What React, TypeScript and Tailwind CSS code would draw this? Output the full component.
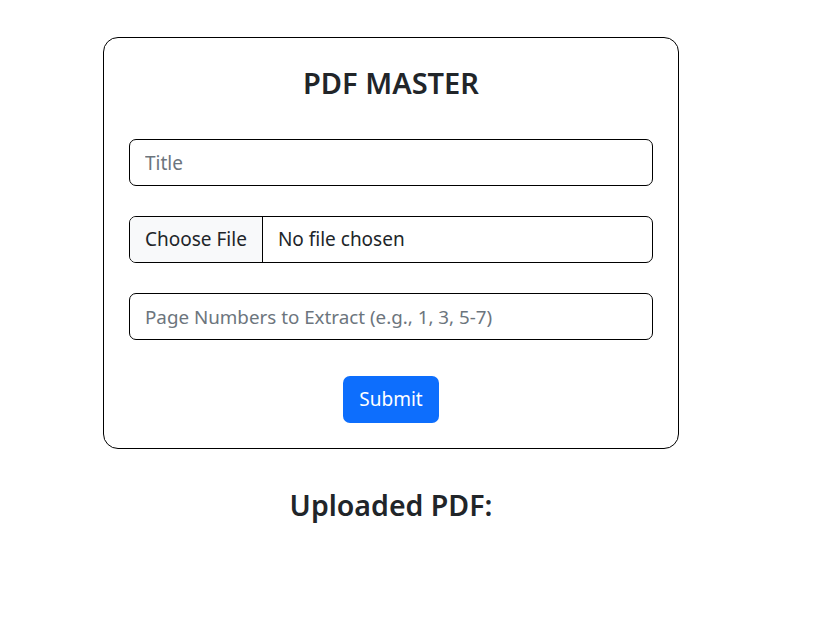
import React from "react";

export default function App() {
  const font = { fontFamily: '"Noto Sans", "Open Sans", sans-serif' };
  return (
    <div className="h-[642px] w-[826px] overflow-hidden bg-white text-[#212529]" style={font}>
      <div className="w-[782px] pt-[37px]">
        <div className="mx-auto w-[576px] rounded-[15px] border border-black px-[25px] pt-[28px] pb-[25px]">
          <h2 className="m-0 h-[34px] text-center text-[29px] font-semibold leading-[34px]">PDF MASTER</h2>
          <div className="mt-[39px] flex flex-col gap-[30px]">
            <input
              type="text"
              placeholder="Title"
              className="h-[47px] w-full rounded-[7px] border border-black px-[15px] text-[19px] text-[#212529] outline-none placeholder:text-[#6c757d]"
            />
            <div className="flex h-[47px] w-full overflow-hidden rounded-[7px] border border-black text-[19px]">
              <div className="flex items-center border-r border-black bg-[#f8f9fa] px-[15px]">Choose File</div>
              <div className="flex items-center px-[15px]">No file chosen</div>
            </div>
            <input
              type="text"
              placeholder="Page Numbers to Extract (e.g., 1, 3, 5-7)"
              className="h-[47px] w-full rounded-[7px] border border-black px-[15px] text-[18.8px] text-[#212529] outline-none placeholder:text-[#6c757d]"
            />
          </div>
          <div className="mt-[36px] flex justify-center">
            <button className="h-[47px] rounded-[7px] bg-[#0d6efd] px-[16px] text-[19px] text-white">Submit</button>
          </div>
        </div>
        <h2 className="mt-[39px] h-[34px] text-center text-[28.5px] font-semibold leading-[34px]">Uploaded PDF:</h2>
      </div>
    </div>
  );
}
